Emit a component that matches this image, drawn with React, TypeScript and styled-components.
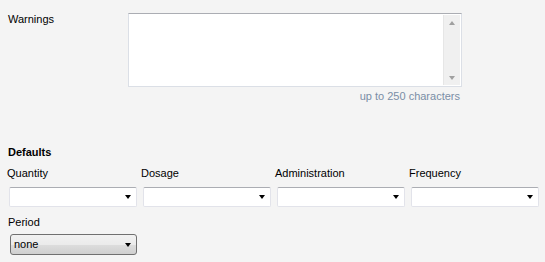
import React from 'react';
import styled, { createGlobalStyle } from 'styled-components';

const GlobalStyle = createGlobalStyle`
  body {
    margin: 0;
    background: #f4f4f4;
    font-family: "Liberation Sans", Arial, sans-serif;
    font-size: 11px;
    color: #000;
  }
`;

const Page = styled.div`
  width: 545px;
  height: 262px;
  padding: 13px 0 0 8px;
  box-sizing: border-box;
`;

const Row = styled.div`
  display: flex;
`;

const Label = styled.div<{ $width?: number }>`
  line-height: 13px;
  width: ${(p) => (p.$width ? `${p.$width}px` : 'auto')};
  flex-shrink: 0;
`;

const TextBox = styled.div`
  width: 334px;
  height: 74px;
  box-sizing: border-box;
  display: flex;
  background: #fff;
  border: 1px solid #dbdfe6;
  border-top-color: #abadb3;
  padding: 1px 1px 1px 0;
`;

const TextArea = styled.div`
  flex: 1;
`;

const ScrollBar = styled.div`
  width: 16px;
  display: flex;
  flex-direction: column;
  justify-content: space-between;
  align-items: center;
  background: #f0f0f0;
  border-left: 1px solid #e6e6e6;
  padding: 6px 0 5px;
`;

const Arrow = styled.div<{ $up?: boolean }>`
  width: 0;
  height: 0;
  border-left: 3.5px solid transparent;
  border-right: 3.5px solid transparent;
  ${(p) =>
    p.$up ? 'border-bottom: 4px solid #a0a0a0;' : 'border-top: 4px solid #a0a0a0;'}
`;

const Hint = styled.div`
  margin: 3px 0 0 120px;
  width: 334px;
  padding-right: 2px;
  box-sizing: border-box;
  text-align: right;
  line-height: 13px;
  color: #7a8ea6;
`;

const Section = styled.div`
  margin-top: 43px;
  font-weight: bold;
  line-height: 13px;
`;

const FieldGrid = styled.div`
  display: grid;
  grid-template-columns: repeat(4, 128px);
  column-gap: 6px;
  margin-top: 8px;
`;

const Field = styled.div`
  display: flex;
  flex-direction: column;
`;

const FieldLabel = styled.div<{ $gap: number }>`
  line-height: 13px;
  margin-bottom: ${(p) => p.$gap}px;
  margin-left: -1px;
`;

const Combo = styled.div<{ $button?: boolean }>`
  position: relative;
  box-sizing: border-box;
  height: ${(p) => (p.$button ? 21 : 20)}px;
  width: ${(p) => (p.$button ? 127 : 128)}px;
  margin-left: 1px;
  display: flex;
  align-items: center;
  padding-left: 3px;
  line-height: 13px;
  border-radius: ${(p) => (p.$button ? 3 : 2)}px;
  border: 1px solid ${(p) => (p.$button ? '#707070' : '#e2e3ea')};
  border-top-color: ${(p) => (p.$button ? '#707070' : '#abadb3')};
  background: ${(p) =>
    p.$button ? 'linear-gradient(#f2f2f2 0%, #ebebeb 50%, #dddddd 51%, #cfcfcf 100%)' : '#fff'};
`;

const DropArrow = styled.div`
  position: absolute;
  right: 5px;
  top: 50%;
  margin-top: -2px;
  width: 0;
  height: 0;
  border-left: 3.5px solid transparent;
  border-right: 3.5px solid transparent;
  border-top: 4px solid #000;
`;

const PeriodBlock = styled.div`
  margin-top: 9px;
  margin-left: 1px;
  display: flex;
  flex-direction: column;
`;

const fields = ['Quantity', 'Dosage', 'Administration', 'Frequency'];

export default function App() {
  return (
    <>
      <GlobalStyle />
      <Page>
        <Row>
          <Label $width={120}>Warnings</Label>
          <TextBox>
            <TextArea />
            <ScrollBar>
              <Arrow $up />
              <Arrow />
            </ScrollBar>
          </TextBox>
        </Row>
        <Hint>up to 250 characters</Hint>
        <Section>Defaults</Section>
        <FieldGrid>
          {fields.map((f) => (
            <Field key={f}>
              <FieldLabel $gap={7}>{f}</FieldLabel>
              <Combo>
                <DropArrow />
              </Combo>
            </Field>
          ))}
        </FieldGrid>
        <PeriodBlock>
          <FieldLabel $gap={5}>Period</FieldLabel>
          <Combo $button>
            none
            <DropArrow />
          </Combo>
        </PeriodBlock>
      </Page>
    </>
  );
}
